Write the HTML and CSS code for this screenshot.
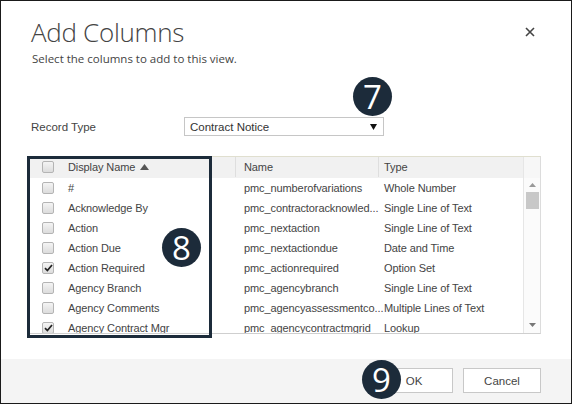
FILE: index.html
```html
<!DOCTYPE html>
<html>
<head>
<meta charset="utf-8">
<link rel="stylesheet" href="styles.css">
</head>
<body>
<div class="dialog">
  <div class="head">
    <div class="head-text">
      <h1 class="title">Add Columns</h1>
      <p class="subtitle">Select the columns to add to this view.</p>
    </div>
    <button class="close" aria-label="Close">
      <svg width="10" height="10" viewBox="0 0 10 10"><path d="M1 1L9 9M9 1L1 9" stroke="#444" stroke-width="1.6" fill="none"/></svg>
    </button>
  </div>

  <div class="record">
    <span class="record-label">Record Type</span>
    <div class="select">
      <span>Contract Notice</span>
      <svg class="select-arrow" width="7" height="6" viewBox="0 0 7 6"><path d="M0 0H7L3.5 6Z" fill="#111"/></svg>
    </div>
  </div>

  <div class="grid">
    <div class="grid-main">
      <div class="row row-head">
        <div class="cell cell-check"><span class="cb"></span></div>
        <div class="cell cell-display">Display Name <svg class="sort" width="9" height="6" viewBox="0 0 9 6"><path d="M0 6H9L4.5 0Z" fill="#555"/></svg></div>
        <div class="cell cell-name">Name</div>
        <div class="cell cell-type">Type</div>
      </div>
      <div class="grid-body">
        <div class="row">
          <div class="cell cell-check"><span class="cb"></span></div>
          <div class="cell cell-display">#</div>
          <div class="cell cell-name">pmc_numberofvariations</div>
          <div class="cell cell-type">Whole Number</div>
        </div>
        <div class="row">
          <div class="cell cell-check"><span class="cb"></span></div>
          <div class="cell cell-display">Acknowledge By</div>
          <div class="cell cell-name">pmc_contractoracknowled...</div>
          <div class="cell cell-type">Single Line of Text</div>
        </div>
        <div class="row">
          <div class="cell cell-check"><span class="cb"></span></div>
          <div class="cell cell-display">Action</div>
          <div class="cell cell-name">pmc_nextaction</div>
          <div class="cell cell-type">Single Line of Text</div>
        </div>
        <div class="row">
          <div class="cell cell-check"><span class="cb"></span></div>
          <div class="cell cell-display">Action Due</div>
          <div class="cell cell-name">pmc_nextactiondue</div>
          <div class="cell cell-type">Date and Time</div>
        </div>
        <div class="row">
          <div class="cell cell-check"><span class="cb checked"><svg width="9" height="8" viewBox="0 0 9 8"><path d="M1 4.2L3.4 6.6L8 1" stroke="#222" stroke-width="1.7" fill="none"/></svg></span></div>
          <div class="cell cell-display">Action Required</div>
          <div class="cell cell-name">pmc_actionrequired</div>
          <div class="cell cell-type">Option Set</div>
        </div>
        <div class="row">
          <div class="cell cell-check"><span class="cb"></span></div>
          <div class="cell cell-display">Agency Branch</div>
          <div class="cell cell-name">pmc_agencybranch</div>
          <div class="cell cell-type">Single Line of Text</div>
        </div>
        <div class="row">
          <div class="cell cell-check"><span class="cb"></span></div>
          <div class="cell cell-display">Agency Comments</div>
          <div class="cell cell-name">pmc_agencyassessmentco...</div>
          <div class="cell cell-type">Multiple Lines of Text</div>
        </div>
        <div class="row">
          <div class="cell cell-check"><span class="cb checked"><svg width="9" height="8" viewBox="0 0 9 8"><path d="M1 4.2L3.4 6.6L8 1" stroke="#222" stroke-width="1.7" fill="none"/></svg></span></div>
          <div class="cell cell-display">Agency Contract Mgr</div>
          <div class="cell cell-name">pmc_agencycontractmgrid</div>
          <div class="cell cell-type">Lookup</div>
        </div>
      </div>
    </div>
    <div class="scrollbar">
      <div class="scroll-corner"></div>
      <div class="scroll-track">
        <svg class="scroll-arrow" width="7" height="4" viewBox="0 0 7 4"><path d="M0 4H7L3.5 0Z" fill="#999"/></svg>
        <div class="scroll-thumb"></div>
        <div class="scroll-space"></div>
        <svg class="scroll-arrow" width="7" height="4" viewBox="0 0 7 4"><path d="M0 0H7L3.5 4Z" fill="#777"/></svg>
      </div>
    </div>
  </div>

  <div class="footer">
    <button class="btn">OK</button>
    <button class="btn">Cancel</button>
  </div>

  <div class="highlight"></div>
  <div class="badge badge-7">7</div>
  <div class="badge badge-8">8</div>
  <div class="badge badge-9">9</div>
</div>
</body>
</html>
```

FILE: styles.css
```css
* { box-sizing: border-box; }

html, body {
  margin: 0;
  padding: 0;
  background: #fff;
}

.dialog {
  position: relative;
  width: 572px;
  height: 404px;
  border: 1px solid #1a1a1a;
  background: #fff;
  display: flex;
  flex-direction: column;
  font-family: "Open Sans", "Noto Sans", "Liberation Sans", sans-serif;
  color: #444;
  overflow: hidden;
}

.head {
  height: 80px;
  display: flex;
  justify-content: space-between;
  align-items: flex-start;
  padding: 14px 35px 0 30px;
}

.title {
  margin: 0;
  font-size: 26px;
  line-height: 34px;
  font-weight: 300;
  color: #444;
  letter-spacing: -0.3px;
}

.subtitle {
  margin: 2px 0 0 1px;
  font-size: 11.5px;
  line-height: 16px;
  color: #444;
}

.close {
  border: 0;
  background: none;
  padding: 0;
  margin-top: 11px;
  width: 12px;
  height: 12px;
  display: flex;
  align-items: center;
  justify-content: center;
}

.record {
  margin-top: 36px;
  display: flex;
  align-items: center;
  padding-left: 30px;
  font-family: "Liberation Sans", Arial, sans-serif;
  font-size: 11.5px;
}

.record-label {
  width: 153px;
}

.select {
  width: 200px;
  height: 19px;
  border: 1px solid #c6c6c6;
  display: flex;
  align-items: center;
  justify-content: space-between;
  padding: 0 6px 0 5px;
  color: #333;
}

.grid {
  margin: 20px 30px 0 28px;
  height: 178px;
  border-top: 1px solid #e0dfcf;
  border-right: 1px solid #dcdcdc;
  border-bottom: 1px solid #cfcfcf;
  display: flex;
  font-family: "Liberation Sans", Arial, sans-serif;
  font-size: 11px;
  letter-spacing: -0.1px;
}

.grid-main {
  width: 494px;
  display: flex;
  flex-direction: column;
}

.row {
  display: grid;
  grid-template-columns: 33px 173px 143px 145px;
  height: 20px;
  flex: none;
  align-items: center;
}

.row-head {
  height: 21px;
  background: #f1f1f1;
  border-bottom: 1px solid #f1f1f1;
}

.row-head .cell {
  height: 100%;
  display: flex;
  align-items: center;
}

.row-head .cell-name,
.row-head .cell-type {
  border-left: 1px solid #dedede;
}

.grid-body {
  flex: 1;
  overflow: hidden;
}

.cell {
  white-space: nowrap;
  overflow: hidden;
  color: #444;
}

.cell-check {
  padding-left: 13px;
  display: flex;
  align-items: center;
}

.cell-display { padding-left: 6px; }
.cell-name { padding-left: 9px; overflow: visible; }
.cell-type { padding-left: 6px; }
.row-head .cell-name { padding-left: 8px; }
.row-head .cell-type { padding-left: 5px; }

.sort {
  margin-left: 5px;
  vertical-align: 1px;
}

.cb {
  width: 12px;
  height: 12px;
  border: 1px solid #b4b4b4;
  border-radius: 2px;
  background: linear-gradient(#f4f4f4, #dcdcdc);
  display: flex;
  align-items: center;
  justify-content: center;
}

.scrollbar {
  width: 17px;
  display: flex;
  flex-direction: column;
  border-left: 1px solid #e6e6e6;
}

.scroll-corner {
  height: 21px;
  background: #f7f7f7;
}

.scroll-track {
  flex: 1;
  display: flex;
  flex-direction: column;
  align-items: center;
  padding: 5px 0 6px;
  background: #fbfbfb;
}

.scroll-thumb {
  margin-top: 5px;
  width: 13px;
  height: 17px;
  background: #c8c8c8;
}

.scroll-space { flex: 1; }

.footer {
  margin-top: auto;
  height: 44px;
  background: #f4f4f4;
  display: flex;
  justify-content: flex-end;
  align-items: flex-start;
  gap: 10px;
  padding: 9px 30px 0 0;
}

.btn {
  width: 78px;
  height: 25px;
  border: 1px solid #c8c8c8;
  background: #fff;
  font-family: "Liberation Sans", Arial, sans-serif;
  font-size: 11.5px;
  color: #444;
  padding: 0;
}

.highlight {
  position: absolute;
  left: 26px;
  top: 155px;
  width: 185px;
  height: 182px;
  border: 3px solid #1c2b3a;
}

.badge {
  position: absolute;
  width: 39px;
  height: 39px;
  border-radius: 50%;
  background: #1c2b3a;
  color: #fff;
  font-family: "Open Sans", "Noto Sans", sans-serif;
  font-size: 33px;
  line-height: 39px;
  text-align: center;
}

.badge-7 { left: 352px; top: 76px; }
.badge-8 { left: 161px; top: 227px; }
.badge-9 { left: 361px; top: 359px; }
```
